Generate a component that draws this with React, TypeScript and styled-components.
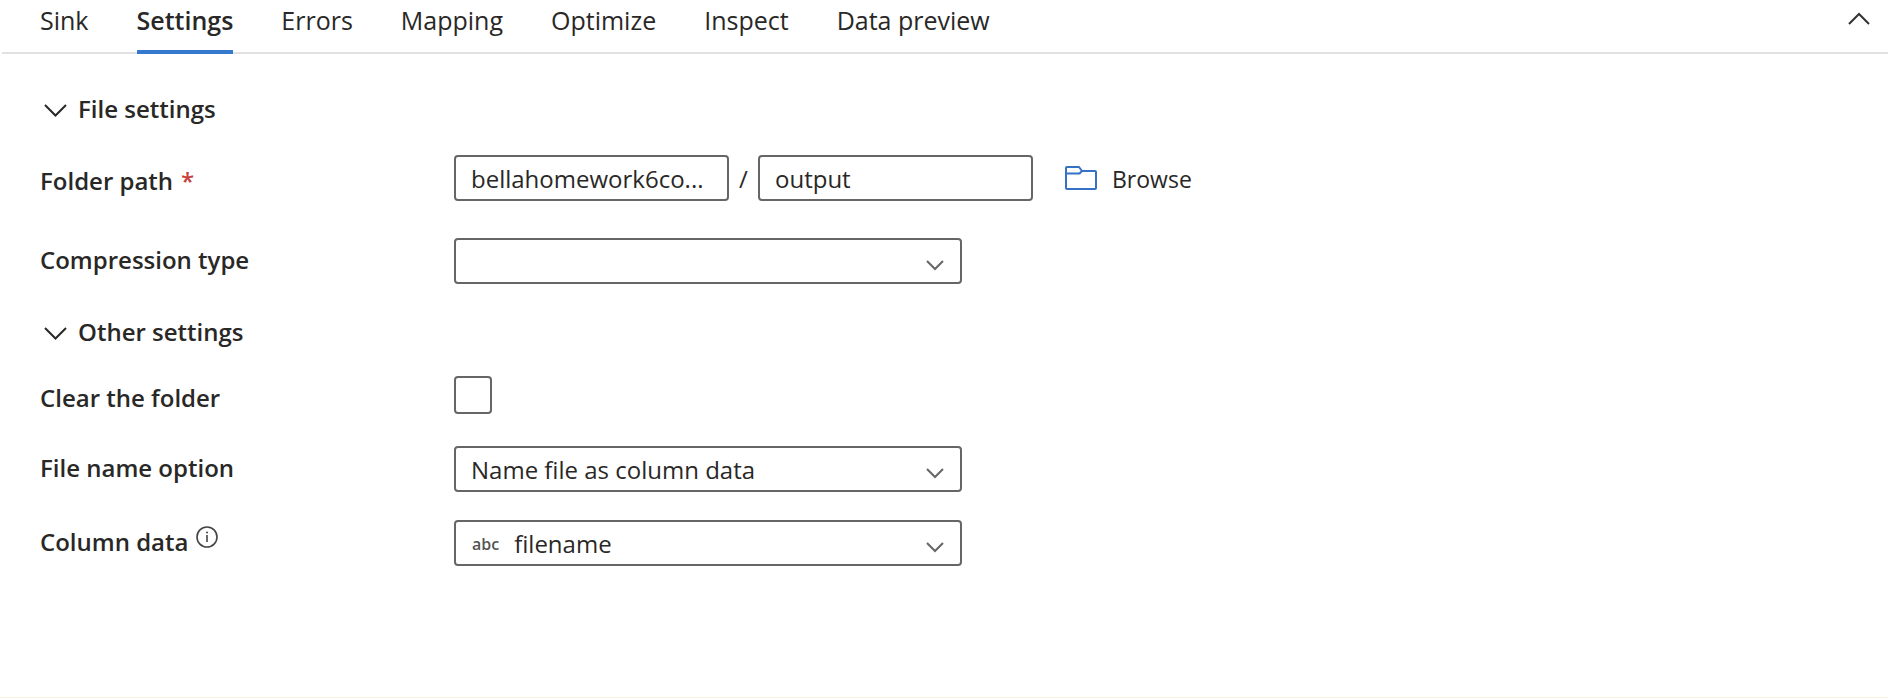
import React from "react";
import styled, { createGlobalStyle } from "styled-components";

const GlobalStyle = createGlobalStyle`
  *, *::before, *::after { box-sizing: border-box; }
  body {
    margin: 0;
    background: #fff;
    color: #292827;
    font-family: "Segoe UI", "Open Sans", "Noto Sans", sans-serif;
    font-size: 24px;
    line-height: 32px;
  }
  button, input, select {
    margin: 0;
    font: inherit;
    color: inherit;
  }
`;

const Panel = styled.main`
  display: flex;
  flex-direction: column;
  min-height: 100vh;
  border-bottom: 1px solid #fbf0da;
`;

const TabBar = styled.header`
  display: flex;
  justify-content: space-between;
  margin-left: 2px;
  padding: 0 16px 0 38px;
  border-bottom: 2px solid #e1e1e1;
`;

const TabList = styled.nav`
  display: flex;
  gap: 48px;
`;

const Tab = styled.button<{ $active?: boolean }>`
  height: 54px;
  margin-bottom: -2px;
  padding: 0 0 10px;
  border: 0;
  border-bottom: 4px solid ${(p) => (p.$active ? "#3579cf" : "transparent")};
  background: none;
  font-size: 25px;
  font-weight: ${(p) => (p.$active ? 600 : 400)};
  white-space: nowrap;
  cursor: pointer;
`;

const CollapseButton = styled.button`
  display: flex;
  align-items: center;
  height: 36px;
  padding: 0 2px;
  border: 0;
  background: none;
`;

const Form = styled.form`
  display: flex;
  flex-direction: column;
  padding: 39px 40px;
`;

const Section = styled.section`
  display: flex;
  flex-direction: column;
`;

const SectionToggle = styled.button`
  display: flex;
  align-items: center;
  align-self: flex-start;
  gap: 11px;
  padding: 0 4px;
  border: 0;
  background: none;
  font-weight: 600;
  cursor: pointer;
`;

const Fields = styled.div<{ $gap: number; $top: number; $bottom: number }>`
  display: flex;
  flex-direction: column;
  gap: ${(p) => p.$gap}px;
  padding: ${(p) => p.$top}px 0 ${(p) => p.$bottom}px;
`;

const Row = styled.div`
  display: grid;
  grid-template-columns: 414px 1fr;
  align-items: center;
  min-height: 46px;
`;

const LabelCell = styled.div<{ $low?: boolean }>`
  display: flex;
  gap: 8px;
  padding: ${(p) => (p.$low ? "6px 0 0" : "0 0 2px")};
  font-weight: 600;
`;

const Required = styled.span`
  color: #c8413c;
`;

const InfoButton = styled.button`
  display: flex;
  align-self: flex-start;
  padding: 0;
  border: 0;
  background: none;
`;

const PathGroup = styled.div`
  display: flex;
  align-items: center;
`;

const Slash = styled.span`
  width: 29px;
  padding-top: 2px;
  text-align: center;
`;

const TextBox = styled.input`
  width: 275px;
  height: 46px;
  padding: 1px 15px 0;
  border: 2px solid #666;
  border-radius: 4px;
  background: #fff;
`;

const BrowseButton = styled.button`
  display: flex;
  align-items: center;
  gap: 15px;
  margin-left: 32px;
  padding: 0;
  border: 0;
  background: none;
  font-size: 23px;
  cursor: pointer;
`;

const BrowseText = styled.span`
  padding-top: 1px;
`;

const SelectBox = styled.div`
  position: relative;
  display: flex;
  align-items: center;
  width: 508px;
  max-width: 100%;
  height: 46px;
  border: 2px solid #666;
  border-radius: 4px;
`;

const Select = styled.select`
  flex: 1;
  align-self: stretch;
  padding: 2px 48px 0 15px;
  border: 0;
  background: none;
  appearance: none;
`;

const TypeTag = styled.span`
  padding: 1px 0 0 16px;
  color: #555;
  font-size: 16px;
  font-weight: 600;
`;

const SelectChevron = styled.svg`
  position: absolute;
  right: 16px;
  top: 20px;
  pointer-events: none;
`;

const CheckBox = styled.input`
  width: 38px;
  height: 38px;
  border: 2px solid #666;
  border-radius: 4px;
  background: #fff;
  appearance: none;

  &:checked {
    background: #3579cf;
  }
`;

const tabs = ["Sink", "Settings", "Errors", "Mapping", "Optimize", "Inspect", "Data preview"];

function SectionChevron() {
  return (
    <svg width="23" height="16" viewBox="0 0 23 16" fill="none" stroke="#292827" strokeWidth="2" aria-hidden="true">
      <path d="M1 4l10.500 10.500L22 4" />
    </svg>
  );
}

function DropChevron() {
  return (
    <SelectChevron width="18" height="11" viewBox="0 0 18 11" fill="none" stroke="#666" strokeWidth="2" aria-hidden="true">
      <path d="M1 1l8 8 8-8" />
    </SelectChevron>
  );
}

function FolderIcon() {
  return (
    <svg width="32" height="24" viewBox="0 0 32 24" fill="none" stroke="#3572c6" strokeWidth="2" strokeLinejoin="round" aria-hidden="true">
      <path d="M1 2a1 1 0 0 1 1-1h12l3 4h13a1 1 0 0 1 1 1v16a1 1 0 0 1-1 1H2a1 1 0 0 1-1-1z" />
      <path d="M1 7.500h13.500L17 5" />
    </svg>
  );
}

function InfoIcon() {
  return (
    <svg width="22" height="22" viewBox="0 0 22 22" fill="none" stroke="#444" aria-hidden="true">
      <circle cx="11" cy="11" r="10" strokeWidth="1.600" />
      <path d="M11 9v7" strokeWidth="1.600" />
      <circle cx="11" cy="6.500" r="1" fill="#444" stroke="none" />
    </svg>
  );
}

export default function App() {
  return (
    <>
      <GlobalStyle />
      <Panel>
        <TabBar>
          <TabList>
            {tabs.map((name) => (
              <Tab key={name} type="button" $active={name === "Settings"}>
                {name}
              </Tab>
            ))}
          </TabList>
          <CollapseButton type="button" aria-label="Collapse panel">
            <svg width="22" height="13" viewBox="0 0 22 13" fill="none" stroke="#333" strokeWidth="2" aria-hidden="true">
              <path d="M1 12L11 2l10 10" />
            </svg>
          </CollapseButton>
        </TabBar>
        <Form>
          <Section>
            <SectionToggle type="button" aria-expanded="true">
              <SectionChevron />
              File settings
            </SectionToggle>
            <Fields $gap={37} $top={30} $bottom={32}>
              <Row>
                <LabelCell $low>
                  <label htmlFor="container">Folder path</label>
                  <Required>*</Required>
                </LabelCell>
                <PathGroup>
                  <TextBox id="container" type="text" defaultValue="bellahomework6co..." />
                  <Slash>/</Slash>
                  <TextBox type="text" aria-label="Folder" defaultValue="output" />
                  <BrowseButton type="button">
                    <FolderIcon />
                    <BrowseText>Browse</BrowseText>
                  </BrowseButton>
                </PathGroup>
              </Row>
              <Row>
                <LabelCell>
                  <label htmlFor="compression">Compression type</label>
                </LabelCell>
                <SelectBox>
                  <Select id="compression" defaultValue="">
                    <option value=""></option>
                  </Select>
                  <DropChevron />
                </SelectBox>
              </Row>
            </Fields>
          </Section>
          <Section>
            <SectionToggle type="button" aria-expanded="true">
              <SectionChevron />
              Other settings
            </SectionToggle>
            <Fields $gap={28} $top={24} $bottom={0}>
              <Row>
                <LabelCell $low>
                  <label htmlFor="clear">Clear the folder</label>
                </LabelCell>
                <CheckBox id="clear" type="checkbox" />
              </Row>
              <Row>
                <LabelCell>
                  <label htmlFor="nameOption">File name option</label>
                </LabelCell>
                <SelectBox>
                  <Select id="nameOption">
                    <option>Name file as column data</option>
                  </Select>
                  <DropChevron />
                </SelectBox>
              </Row>
              <Row>
                <LabelCell>
                  <label htmlFor="columnData">Column data</label>
                  <InfoButton type="button" aria-label="About column data">
                    <InfoIcon />
                  </InfoButton>
                </LabelCell>
                <SelectBox>
                  <TypeTag>abc</TypeTag>
                  <Select id="columnData">
                    <option>filename</option>
                  </Select>
                  <DropChevron />
                </SelectBox>
              </Row>
            </Fields>
          </Section>
        </Form>
      </Panel>
    </>
  );
}
